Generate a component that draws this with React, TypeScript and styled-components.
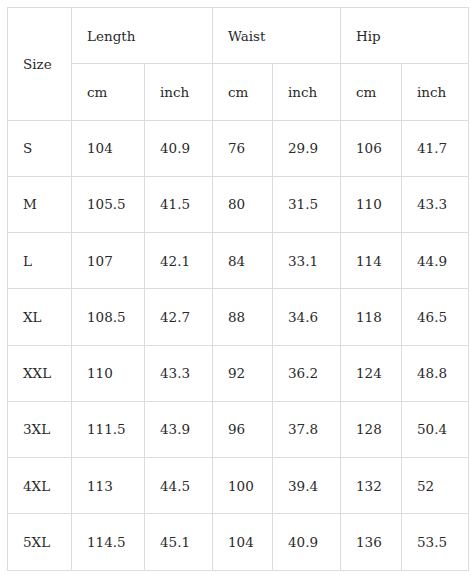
import React from "react";
import styled, { createGlobalStyle } from "styled-components";

const Global = createGlobalStyle`
  html, body { margin: 0; padding: 0; background: #fff; }
  body { font-family: "DejaVu Serif", "Liberation Serif", serif; }
`;

const Wrap = styled.div`
  padding: 7px 0 0 7px;
`;

const Table = styled.table`
  border-collapse: collapse;
  table-layout: fixed;
  width: 462px;
  color: #2a2a2a;
  font-size: 13.5px;
  font-variant-numeric: oldstyle-nums;
  font-feature-settings: "onum" 1;
`;

const Row = styled.tr`
  height: 56.25px;
`;

const Cell = styled.td`
  border: 1px solid #dcdcdc;
  padding: 0 0 0 15px;
  text-align: left;
  vertical-align: middle;
  font-weight: 400;
  white-space: nowrap;
`;

const widths = [64, 73, 68, 60, 68, 61, 67];

const rows: string[][] = [
  ["S", "104", "40.9", "76", "29.9", "106", "41.7"],
  ["M", "105.5", "41.5", "80", "31.5", "110", "43.3"],
  ["L", "107", "42.1", "84", "33.1", "114", "44.9"],
  ["XL", "108.5", "42.7", "88", "34.6", "118", "46.5"],
  ["XXL", "110", "43.3", "92", "36.2", "124", "48.8"],
  ["3XL", "111.5", "43.9", "96", "37.8", "128", "50.4"],
  ["4XL", "113", "44.5", "100", "39.4", "132", "52"],
  ["5XL", "114.5", "45.1", "104", "40.9", "136", "53.5"],
];

export default function App() {
  return (
    <>
      <Global />
      <Wrap>
        <Table>
          <colgroup>
            {widths.map((w, i) => (
              <col key={i} style={{ width: w }} />
            ))}
          </colgroup>
          <tbody>
            <Row>
              <Cell rowSpan={2}>Size</Cell>
              <Cell colSpan={2}>Length</Cell>
              <Cell colSpan={2}>Waist</Cell>
              <Cell colSpan={2}>Hip</Cell>
            </Row>
            <Row>
              <Cell>cm</Cell>
              <Cell>inch</Cell>
              <Cell>cm</Cell>
              <Cell>inch</Cell>
              <Cell>cm</Cell>
              <Cell>inch</Cell>
            </Row>
            {rows.map((r) => (
              <Row key={r[0]}>
                {r.map((v, i) => (
                  <Cell key={i}>{v}</Cell>
                ))}
              </Row>
            ))}
          </tbody>
        </Table>
      </Wrap>
    </>
  );
}
